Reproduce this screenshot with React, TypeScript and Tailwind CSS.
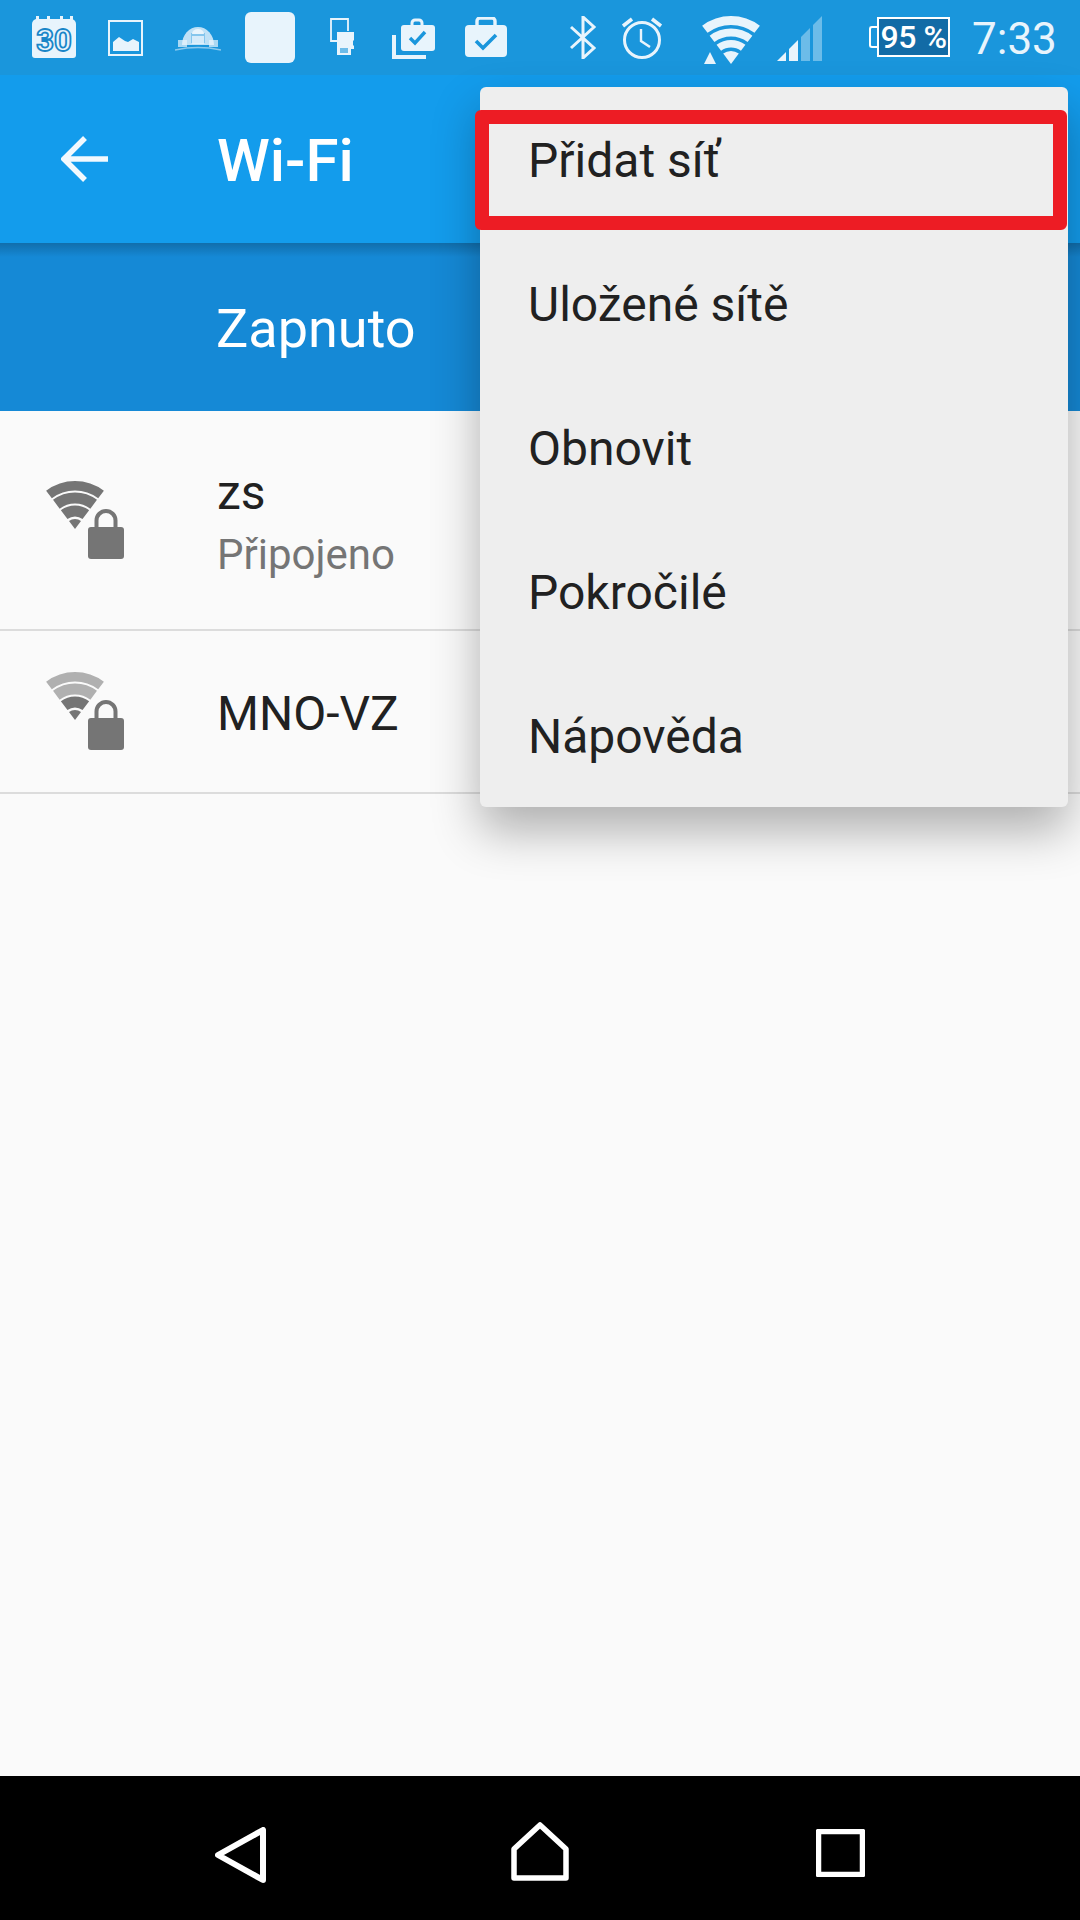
const ICON = '#e8f4fc';
const BAR = '#1a96dc';

// annular wedge pointing up, apex at cx,cy
const band = (cx: number, cy: number, r1: number, r2: number, deg: number) => {
  const a = (deg * Math.PI) / 180;
  const s = Math.sin(a);
  const c = Math.cos(a);
  const p = (r: number, sign: number) => `${(cx + sign * r * s).toFixed(2)} ${(cy - r * c).toFixed(2)}`;
  if (r1 === 0) return `M${cx} ${cy}L${p(r2, -1)}A${r2} ${r2} 0 0 1 ${p(r2, 1)}Z`;
  return `M${p(r1, -1)}L${p(r2, -1)}A${r2} ${r2} 0 0 1 ${p(r2, 1)}L${p(r1, 1)}A${r1} ${r1} 0 0 0 ${p(r1, -1)}Z`;
};

const Calendar = () => (
  <svg width="44" height="42" viewBox="0 0 44 42" className="block">
    <path d="M5 3h34a5 5 0 0 1 5 5v31a3 3 0 0 1-3 3H3a3 3 0 0 1-3-3V8a5 5 0 0 1 5-5Z" fill={ICON} />
    <path d="M4 0h3v4H4zM15 0h3v4h-3zM28 0h3v4h-3zM38 0h3v4h-3z" fill={ICON} />
    <text x="22" y="35" textAnchor="middle" fontFamily="Roboto, sans-serif" fontSize="31" fontWeight="700" fill={ICON} stroke="#1a86c8" strokeWidth="1.8">30</text>
  </svg>
);

const Picture = () => (
  <svg width="35" height="36" viewBox="0 0 35 36" className="block">
    <path d="M1 1h33v34H1z" fill="none" stroke={ICON} strokeWidth="2" />
    <path d="M5 31V22l6-5 6 4 3 1 5-3 6 3v9Z" fill={ICON} />
  </svg>
);

const Dome = () => (
  <svg width="46" height="26" viewBox="0 0 46 26" className="block">
    <path d="M7 20a16 18 0 0 1 32 0Z" fill={ICON} fillOpacity=".8" />
    <path d="M16 8h14v10H16z" fill={BAR} fillOpacity=".35" />
    <path d="M17 9a6 5 0 0 1 12 0Z" fill={ICON} />
    <path d="M17 11h12v8H17z" fill={ICON} fillOpacity=".8" />
    <path d="M3 15h9v7H3zM34 15h9v7h-9z" fill={ICON} fillOpacity=".7" />
    <path d="M0 25q23-5 46 0" fill="none" stroke={ICON} strokeOpacity=".55" strokeWidth="1.6" />
  </svg>
);

const SdCard = () => (
  <svg width="24" height="37" viewBox="0 0 24 37" className="block">
    <path d="M18 13V1H1v22h6" fill="none" stroke={ICON} strokeWidth="1.8" />
    <path d="M7 14h17v8l-1 1v4l1 1v3H21v6H7Z" fill={ICON} />
    <path d="M10 30h8v5h-8z" fill={BAR} fillOpacity=".6" />
  </svg>
);

const Briefcase = ({ w, h, check }: { w: number; h: number; check: string }) => (
  <svg width={w} height={h} viewBox={`0 0 ${w} ${h}`} className="block">
    <path d={`M${w / 2 - 9} 9V4a3 3 0 0 1 3-3h12a3 3 0 0 1 3 3v5`} fill="none" stroke={ICON} strokeWidth="3.4" />
    <rect x="0" y="8" width={w} height={h - 8} rx="4" fill={ICON} />
    <path d={check} fill="none" stroke={BAR} strokeWidth="3.6" />
  </svg>
);

const BriefcaseStack = () => (
  <svg width="43" height="41" viewBox="0 0 43 41" className="block">
    <path d="M2 17v22h32" fill="none" stroke={ICON} strokeWidth="4" />
    <path d="M20 8V5a3 3 0 0 1 3-3h4a3 3 0 0 1 3 3v3" fill="none" stroke={ICON} strokeWidth="3" />
    <rect x="9" y="7" width="34" height="26" rx="3" fill={ICON} />
    <path d="M18 20l5 5 10-11" fill="none" stroke={BAR} strokeWidth="3.4" />
  </svg>
);

const Bluetooth = () => (
  <svg width="28" height="43" viewBox="0 0 28 43" className="block">
    <path d="M2 11l23 21-11 10V1l11 10L2 32" fill="none" stroke={ICON} strokeWidth="3" />
  </svg>
);

const Alarm = () => (
  <svg width="42" height="43" viewBox="0 0 42 43" className="block">
    <circle cx="21" cy="24" r="17.5" fill="none" stroke={ICON} strokeWidth="3" />
    <path d="M20 13v12l9 6" fill="none" stroke={ICON} strokeWidth="2.4" />
    <path d="M2 10l9-7M40 10l-9-7" fill="none" stroke={ICON} strokeWidth="3.6" />
  </svg>
);

const WifiStatus = () => (
  <svg width="58" height="48" viewBox="0 0 58 48" className="block">
    <path d={band(29, 48, 39, 48, 37)} fill={ICON} />
    <path d={band(29, 48, 27.5, 35.5, 37)} fill={ICON} />
    <path d={band(29, 48, 16.5, 24, 37)} fill={ICON} />
    <path d={band(29, 48, 0, 13, 37)} fill={ICON} />
    <path d="M2 48l6-12 6 12Z" fill={ICON} />
  </svg>
);

const Signal = () => (
  <svg width="45" height="45" viewBox="0 0 45 45" className="block">
    <path d="M0 45l9-9v9Z" fill={ICON} />
    <path d="M12 33l9-9v21h-9Z" fill={ICON} />
    <path d="M24 21l9-9v33h-9Z" fill={ICON} fillOpacity=".4" />
    <path d="M36 9l9-9v45h-9Z" fill={ICON} fillOpacity=".4" />
  </svg>
);

const WifiLock = ({ full }: { full: boolean }) => (
  <svg width="78" height="78" viewBox="0 0 78 78" className="block">
    <path d={band(29, 48, 38.5, 48, 37)} fill={full ? '#757575' : '#b0b0b0'} />
    <path d={band(29, 48, 25.5, 36.5, 37)} fill={full ? '#757575' : '#b0b0b0'} />
    <path d={band(29, 48, 12.5, 23.5, 37)} fill="#757575" />
    <path d={band(29, 48, 0, 10, 37)} fill="#757575" />
    <path d="M50.5 47V39.5a9.5 9.5 0 0 1 19 0V47" fill="none" stroke="#757575" strokeWidth="4" />
    <rect x="42" y="46" width="36" height="32" rx="3" fill="#757575" />
  </svg>
);

const menuItems = ['Přidat síť', 'Uložené sítě', 'Obnovit', 'Pokročilé', 'Nápověda'];

export default function App() {
  return (
    <div className="relative flex h-[1920px] w-[1080px] flex-col overflow-hidden bg-[#fafafa] font-['Roboto',sans-serif]">
      {/* Status bar */}
      <div className="flex h-[75px] shrink-0 items-start bg-[#1a96dc]">
        <div className="ml-[32px] mt-[16px]"><Calendar /></div>
        <div className="ml-[32px] mt-[20px]"><Picture /></div>
        <div className="ml-[32px] mt-[25px]"><Dome /></div>
        <div className="ml-[24px] mt-[12px] h-[51px] w-[50px] rounded-[6px] bg-[#e8f4fc]" />
        <div className="ml-[35px] mt-[18px]"><SdCard /></div>
        <div className="ml-[38px] mt-[18px]"><BriefcaseStack /></div>
        <div className="ml-[30px] mt-[17px]"><Briefcase w={42} h={40} check="M11 24l7 7 13-13" /></div>
        <div className="ml-[62px] mt-[16px]"><Bluetooth /></div>
        <div className="ml-[24px] mt-[16px]"><Alarm /></div>
        <div className="ml-[39px] mt-[16px]"><WifiStatus /></div>
        <div className="ml-[17px] mt-[16px]"><Signal /></div>
        <div className="ml-[47px] mt-[17px] flex items-center">
          <div className="h-[22px] w-[8px] rounded-l-[3px] border-2 border-r-0 border-white bg-[#1a96dc]" />
          <div className="flex h-[40px] w-[73px] items-center justify-center border-2 border-white bg-[#126ba6] text-[32px] font-medium leading-none tracking-[-0.5px] text-white">95 %</div>
        </div>
        <div className="ml-[22px] mt-[14px] text-[44px] leading-[50px] text-[#e8f4fc]">7:33</div>
      </div>

      {/* Toolbar */}
      <div className="flex h-[168px] shrink-0 items-center bg-[#139cec]">
        <svg width="47" height="46" viewBox="0 0 47 46" className="ml-[61px] block">
          <path d="M47 23H4M24 2L3 23l21 21" fill="none" stroke="#f2f9fe" strokeWidth="5.5" />
        </svg>
        <div className="ml-[109px] pt-[4px] text-[60px] font-medium leading-none text-white">Wi-Fi</div>
      </div>

      {/* Switch band */}
      <div className="relative flex h-[168px] shrink-0 items-center bg-[#1589d6] pl-[216px] pt-[4px] text-[54px] leading-none text-white">
        <div className="absolute inset-x-0 top-0 h-[14px] bg-gradient-to-b from-black/20 to-transparent" />
        Zapnuto
      </div>

      {/* Network list */}
      <div className="flex h-[220px] shrink-0 items-start border-b-2 border-[#dcdcdc]">
        <div className="ml-[46px] mt-[70px]"><WifiLock full /></div>
        <div className="ml-[93px] mt-[52px]">
          <div className="text-[48px] leading-[60px] text-[#212121]">zs</div>
          <div className="mt-[2px] text-[42px] leading-[60px] text-[#757575]">Připojeno</div>
        </div>
      </div>
      <div className="flex h-[163px] shrink-0 items-start border-b-2 border-[#dcdcdc]">
        <div className="ml-[46px] mt-[41px]"><WifiLock full={false} /></div>
        <div className="ml-[93px] mt-[53px] text-[48px] leading-[60px] text-[#212121]">MNO-VZ</div>
      </div>

      <div className="flex-1" />

      {/* Nav bar */}
      <div className="flex h-[144px] shrink-0 items-start bg-black pl-[215px]">
        <svg width="51" height="56" viewBox="0 0 51 56" className="mt-[51px] block">
          <path d="M48 3v50L3 28Z" fill="none" stroke="#fff" strokeWidth="6" strokeLinejoin="round" />
        </svg>
        <svg width="58" height="59" viewBox="0 0 58 59" className="ml-[245px] mt-[46px] block">
          <path d="M29 3L3 27v29h52V27Z" fill="none" stroke="#fff" strokeWidth="5.5" strokeLinejoin="round" />
        </svg>
        <svg width="49" height="48" viewBox="0 0 49 48" className="ml-[247px] mt-[53px] block">
          <rect x="2.5" y="2.5" width="44" height="43" fill="none" stroke="#fff" strokeWidth="5.5" strokeLinejoin="round" />
        </svg>
      </div>

      {/* Overflow menu */}
      <div className="absolute left-[480px] top-[87px] w-[588px] rounded-[6px] bg-[#eeeeee] shadow-[0_24px_48px_rgba(0,0,0,0.3)]">
        {menuItems.map((item) => (
          <div key={item} className="flex h-[144px] items-center pl-[48px] pt-[4px] text-[48px] leading-none text-[#212121]">
            {item}
          </div>
        ))}
      </div>

      {/* Annotation box */}
      <div className="absolute left-[475px] top-[110px] h-[120px] w-[592px] rounded-[6px] border-[14px] border-[#ed1c24]" />
    </div>
  );
}
